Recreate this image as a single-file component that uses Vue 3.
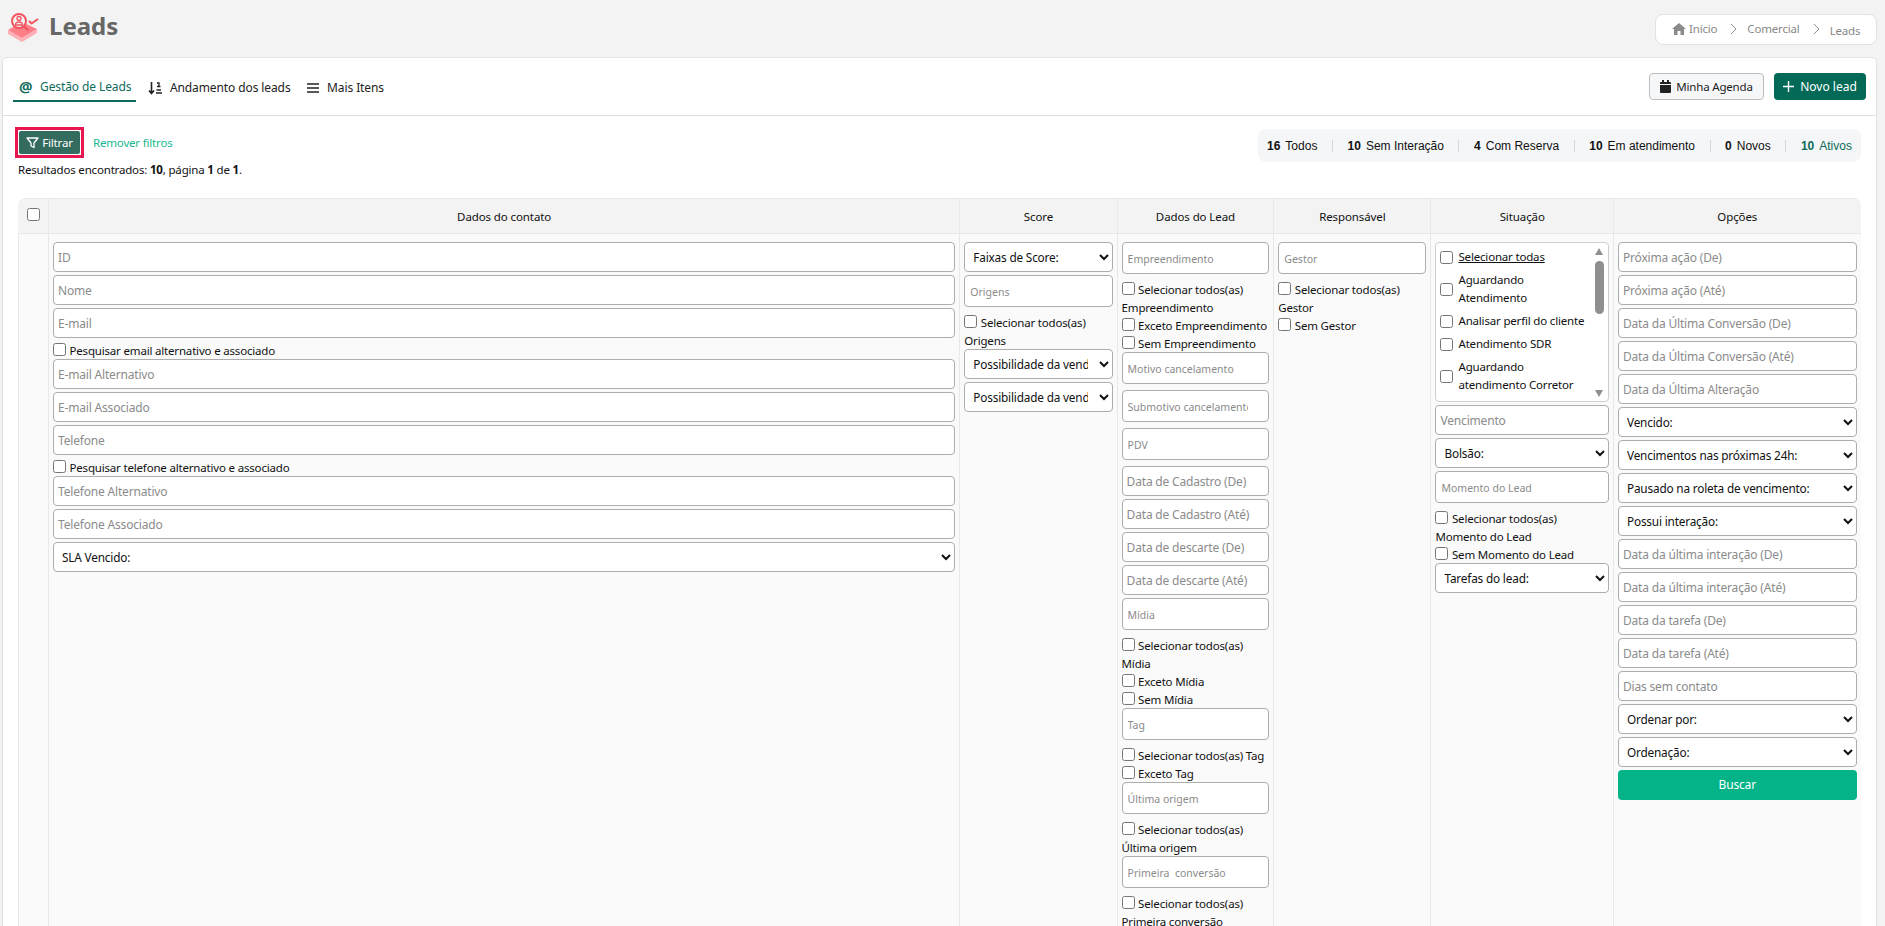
<script setup>
const T = 'in', G = 'tag', S = 'sel', C = 'chk'
const contato = [
  [T, 'ID'], [T, 'Nome'], [T, 'E-mail'], [C, 'Pesquisar email alternativo e associado'],
  [T, 'E-mail Alternativo'], [T, 'E-mail Associado'], [T, 'Telefone'],
  [C, 'Pesquisar telefone alternativo e associado'], [T, 'Telefone Alternativo'],
  [T, 'Telefone Associado'], [S, 'SLA Vencido:']
]
const score = [
  [S, 'Faixas de Score:'], [G, 'Origens'], [C, 'Selecionar todos(as) Origens'],
  [S, 'Possibilidade da venda:'], [S, 'Possibilidade da venda:']
]
const lead = [
  [G, 'Empreendimento'], [C, 'Selecionar todos(as) Empreendimento'], [C, 'Exceto Empreendimento'],
  [C, 'Sem Empreendimento'], [G, 'Motivo cancelamento'], [G, 'Submotivo cancelamento'], [G, 'PDV'],
  [T, 'Data de Cadastro (De)'], [T, 'Data de Cadastro (Até)'], [T, 'Data de descarte (De)'],
  [T, 'Data de descarte (Até)'], [G, 'Mídia'], [C, 'Selecionar todos(as) Mídia'], [C, 'Exceto Mídia'],
  [C, 'Sem Mídia'], [G, 'Tag'], [C, 'Selecionar todos(as) Tag'], [C, 'Exceto Tag'],
  [G, 'Última origem'], [C, 'Selecionar todos(as) Última origem'],
  [G, 'Primeira\u00a0 conversão'], [C, 'Selecionar todos(as) Primeira conversão']
]
const resp = [[G, 'Gestor'], [C, 'Selecionar todos(as) Gestor'], [C, 'Sem Gestor']]
const situacao = [
  [T, 'Vencimento'], [S, 'Bolsão:'], [G, 'Momento do Lead'],
  [C, 'Selecionar todos(as) Momento do Lead'], [C, 'Sem Momento do Lead'], [S, 'Tarefas do lead:']
]
const opcoes = [
  [T, 'Próxima ação (De)'], [T, 'Próxima ação (Até)'], [T, 'Data da Última Conversão (De)'],
  [T, 'Data da Última Conversão (Até)'], [T, 'Data da Última Alteração'], [S, 'Vencido:'],
  [S, 'Vencimentos nas próximas 24h:'], [S, 'Pausado na roleta de vencimento:'], [S, 'Possui interação:'],
  [T, 'Data da última interação (De)'], [T, 'Data da última interação (Até)'], [T, 'Data da tarefa (De)'],
  [T, 'Data da tarefa (Até)'], [T, 'Dias sem contato'], [S, 'Ordenar por:'], [S, 'Ordenação:']
]
const colsBefore = [contato, score, lead, resp]
const situacoes = ['Aguardando Atendimento', 'Analisar perfil do cliente', 'Atendimento SDR', 'Aguardando atendimento Corretor']
const stats = [
  ['16', 'Todos'], ['10', 'Sem Interação'], ['4', 'Com Reserva'],
  ['10', 'Em atendimento'], ['0', 'Novos'], ['10', 'Ativos']
]
const heads = ['Dados do contato', 'Score', 'Dados do Lead', 'Responsável', 'Situação', 'Opções']
</script>

<template>
  <div class="page">
    <header class="top">
      <div class="title">
        <svg class="logo" width="32" height="32" viewBox="0 0 32 32">
          <path d="M1 20l14 8 15-9v4L15 32 1 24z" fill="#ffb0b6" />
          <path d="M1 20l14-8 15 7-15 9z" fill="#ff7f89" />
          <circle cx="12" cy="11" r="7" fill="#f3f3f3" stroke="#f2545f" stroke-width="2" />
          <circle cx="12" cy="8.500" r="2" fill="none" stroke="#f2545f" stroke-width="1.300" />
          <path d="M8.500 15c0-4 7-4 7 0z" fill="none" stroke="#f2545f" stroke-width="1.300" />
          <path d="M17 16.500l4.500 4" stroke="#f2545f" stroke-width="2.200" />
          <path d="M22 11l2.500 2.500L31 9" fill="none" stroke="#f2545f" stroke-width="2" />
        </svg>
        <h1>Leads</h1>
      </div>
      <nav class="crumbs">
        <svg width="14" height="12" viewBox="0 0 14 12"><path d="M7 0L0 6h2v6h3.500V8h3v4H12V6h2z" fill="#8a8a8a" /></svg>
        <span class="c-home">Início</span>
        <svg class="chev" width="7" height="12" viewBox="0 0 7 12"><path d="M1 1l5 5-5 5" fill="none" stroke="#8f8f8f" /></svg>
        <span>Comercial</span>
        <svg class="chev" width="7" height="12" viewBox="0 0 7 12"><path d="M1 1l5 5-5 5" fill="none" stroke="#8f8f8f" /></svg>
        <span class="c-last">Leads</span>
      </nav>
    </header>

    <main class="card">
      <div class="tabbar">
        <div class="tabs">
          <a class="tab active"><span class="at">@</span>Gestão de Leads</a>
          <a class="tab">
            <svg width="14" height="14" viewBox="0 0 14 14">
              <path d="M3.500 1v11M1 9.500L3.500 12.500 6 9.500" fill="none" stroke="#222" stroke-width="1.600" />
              <path d="M9 2h2v3M8 12h6M8.500 9h4.500M9 5.500h3.500" fill="none" stroke="#222" stroke-width="1.300" />
            </svg>
            Andamento dos leads
          </a>
          <a class="tab">
            <svg width="12" height="12" viewBox="0 0 12 12"><path d="M0 2h12M0 6h12M0 10h12" stroke="#222" stroke-width="1.600" /></svg>
            Mais Itens
          </a>
        </div>
        <div class="actions">
          <button class="btn light">
            <svg width="11" height="13" viewBox="0 0 11 13"><path d="M0 5h11v7a1 1 0 0 1-1 1H1a1 1 0 0 1-1-1zM0 4V3a1 1 0 0 1 1-1h1V0h2v2h3V0h2v2h1a1 1 0 0 1 1 1v1z" fill="#222" /></svg>
            Minha Agenda
          </button>
          <button class="btn dark">
            <svg width="11" height="11" viewBox="0 0 11 11"><path d="M5.500 0v11M0 5.500h11" stroke="#fff" stroke-width="1.400" /></svg>
            Novo lead
          </button>
        </div>
      </div>

      <div class="content">
        <div class="toolbar">
          <div>
            <div class="filter-line">
              <div class="focus-ring">
                <button class="filter">
                  <svg width="13" height="12" viewBox="0 0 13 12"><path d="M1 1h11L8 6v4.500L5 9V6z" fill="none" stroke="#fff" stroke-width="1.300" stroke-linejoin="round" /></svg>
                  Filtrar
                </button>
              </div>
              <a class="remove">Remover filtros</a>
            </div>
            <p class="results">Resultados encontrados: <b>10</b>, página <b>1</b> de <b>1</b>.</p>
          </div>
          <div class="stats">
            <template v-for="(s, i) in stats" :key="s[1]">
              <span v-if="i" class="sep"></span>
              <span class="stat" :class="{ on: s[1] === 'Ativos' }"><b>{{ s[0] }}</b>{{ s[1] }}</span>
            </template>
          </div>
        </div>

        <div class="grid">
          <div class="th first"><input type="checkbox" class="cb" /></div>
          <div v-for="h in heads" :key="h" class="th">{{ h }}</div>

          <div class="td"></div>
          <div v-for="(col, ci) in colsBefore" :key="ci" class="td">
            <template v-for="(f, i) in col" :key="i">
              <input v-if="f[0] === T" class="f-in" :placeholder="f[1]" />
              <input v-else-if="f[0] === G" class="f-tag" :placeholder="f[1]" />
              <select v-else-if="f[0] === S" class="f-sel"><option>{{ f[1] }}</option></select>
              <label v-else class="f-chk"><input type="checkbox" class="cb" />{{ f[1] }}</label>
            </template>
          </div>

          <div class="td">
            <div class="listbox">
              <label class="li under"><input type="checkbox" class="cb" /><span>Selecionar todas</span></label>
              <label v-for="s in situacoes" :key="s" class="li"><input type="checkbox" class="cb" /><span>{{ s }}</span></label>
              <div class="bar">
                <i class="up"></i>
                <i class="thumb"></i>
                <i class="down"></i>
              </div>
            </div>
            <template v-for="(f, i) in situacao" :key="i">
              <input v-if="f[0] === T" class="f-in" :placeholder="f[1]" />
              <input v-else-if="f[0] === G" class="f-tag" :placeholder="f[1]" />
              <select v-else-if="f[0] === S" class="f-sel"><option>{{ f[1] }}</option></select>
              <label v-else class="f-chk"><input type="checkbox" class="cb" />{{ f[1] }}</label>
            </template>
          </div>

          <div class="td">
            <template v-for="(f, i) in opcoes" :key="i">
              <input v-if="f[0] === T" class="f-in" :placeholder="f[1]" />
              <select v-else class="f-sel"><option>{{ f[1] }}</option></select>
            </template>
            <button class="search">Buscar</button>
          </div>
        </div>
      </div>
    </main>
  </div>
</template>

<style scoped>
.page {
  height: 926px;
  overflow: hidden;
  background: #f3f3f3;
  font: 11.500px/18px "Noto Sans", sans-serif;
  letter-spacing: -0.18px;
  color: #111;
}
.top {
  height: 57px;
  box-sizing: border-box;
  padding: 14px 8px 0 7px;
  display: flex;
  justify-content: space-between;
  align-items: flex-start;
}
.title { display: flex; align-items: center; gap: 10px; margin-top: -4px; }
.title h1 { margin: 0; font: 700 24px/32px "Noto Sans", sans-serif; letter-spacing: 0; color: #666; }
.crumbs {
  box-sizing: border-box;
  width: 222px;
  height: 31px;
  background: #fff;
  border: 1px solid #e2e2e2;
  border-radius: 8px;
  display: flex;
  align-items: center;
  padding: 0 0 2px 16px;
  color: #888;
}
.c-home { margin-left: 3px; }
.chev { margin: 0 10px 0 13px; }
.c-last { position: relative; top: 2px; }
.card {
  margin: 0 8px 0 2px;
  background: #fff;
  border: 1px solid #e2e2e2;
  border-radius: 5px 5px 0 0;
  height: 900px;
}
.tabbar {
  height: 58px;
  box-sizing: border-box;
  border-bottom: 1px solid #e0e0e0;
  padding: 15px 10px 0 10px;
  display: flex;
  justify-content: space-between;
  align-items: flex-start;
}
.tabs { display: flex; gap: 6.500px; font-size: 12px; letter-spacing: -0.1px; }
.tab {
  height: 29px;
  box-sizing: border-box;
  padding: 1px 5px 0;
  display: flex;
  align-items: center;
  gap: 8px;
  color: #222;
  white-space: nowrap;
}
.tab.active { color: #0f6b5a; border-bottom: 2px solid #0b6b5a; padding-left: 6px; gap: 7px; }
.at { font-size: 15px; font-weight: 700; width: 14px; margin-top: -3px; }
.actions { display: flex; gap: 10px; }
.btn {
  font: inherit;
  letter-spacing: inherit;
  height: 27px;
  box-sizing: border-box;
  border-radius: 4px;
  display: flex;
  align-items: center;
  justify-content: center;
  gap: 5px;
  padding: 0;
}
.btn.light { width: 115px; background: #f6f7f9; border: 1px solid #bdbdbd; color: #222; }
.btn.dark { width: 92px; background: #046a57; border: 0; color: #fff; gap: 6px; font-size: 12px; letter-spacing: 0; }
.content { padding: 0 15px 0 15px; }
.toolbar { display: flex; justify-content: space-between; align-items: flex-start; padding-top: 11px; height: 82px; box-sizing: border-box; }
.filter-line { display: flex; align-items: center; gap: 9px; margin-left: -3px; }
.focus-ring {
  border: 3px solid #e8174f;
  width: 69px;
  height: 31px;
  box-sizing: border-box;
  padding: 1px;
}
.filter {
  width: 100%;
  height: 100%;
  font: inherit;
  letter-spacing: inherit;
  color: #fff;
  background: #336b5e;
  border: 0;
  border-radius: 2px;
  display: flex;
  align-items: center;
  justify-content: center;
  gap: 3px;
  padding: 0;
}
.remove { color: #17b890; }
.results { margin: 3px 0 0; }
.results b { font-weight: 700; }
.stats {
  width: 603px;
  height: 33px;
  margin: 2px 0 0 0;
  padding: 1px 9px 0 9px;
  box-sizing: border-box;
  background: #f5f6f7;
  border-radius: 8px;
  display: flex;
  align-items: center;
  justify-content: space-between;
  font: 12px "Liberation Sans", sans-serif;
  letter-spacing: 0;
}
.stat b { margin-right: 5px; }
.stat.on { color: #0b6b5a; }
.sep { width: 1px; height: 12px; background: #d8d8d8; }
.grid {
  display: grid;
  grid-template-columns: 30px 911.3px 157.3px 156.7px 157.2px 182.5px 247.6px;
  border-radius: 8px 8px 0 0;
  overflow: hidden;
  border-top: 1px solid #e9e9e9;
}
.th {
  height: 35px;
  box-sizing: border-box;
  padding-top: 2px;
  letter-spacing: -0.1px;
  background: #f3f3f3;
  border-left: 1px solid #e8e8e8;
  border-bottom: 1px solid #e8e8e8;
  display: flex;
  align-items: center;
  justify-content: center;
}
.th.first { align-items: flex-start; padding-top: 9px; border-left: 0; }
.td {
  background: #fafafa;
  border-left: 1px solid #e8e8e8;
  padding: 8px 4px 0;
  min-height: 700px;
  box-sizing: border-box;
  display: flex;
  flex-direction: column;
  align-items: stretch;
  min-width: 0;
}
.td:first-of-type { border-left: 0; }
.cb {
  width: 13px;
  height: 13px;
  margin: 0 3.500px 0 0;
  vertical-align: -1px;
}
.th .cb { margin: 0; }
.f-in, .f-tag, .f-sel {
  display: block;
  width: 100%;
  box-sizing: border-box;
  background: #fff;
  border: 1px solid #adadad;
  border-radius: 4px;
  margin: 0 0 3px;
  font: 12px "Noto Sans", sans-serif;
  letter-spacing: -0.18px;
  color: #111;
  outline: 0;
  flex: none;
}
.f-in { height: 30px; padding: 0 4px; }
.f-tag { height: 32px; margin-bottom: 6px; padding: 2px 20px 0 5px; font-size: 10.500px; letter-spacing: 0; }
.f-sel { height: 30px; padding: 0 8px 0 4px; font-size: 11.800px; }
.f-in::placeholder, .f-tag::placeholder { color: #8b8b8b; opacity: 1; }
.f-chk { display: block; line-height: 18px; flex: none; padding-top: 1px; margin-bottom: -1px; }
.listbox {
  position: relative;
  height: 160px;
  flex: none;
  box-sizing: border-box;
  background: #fff;
  border: 1px solid #cfcfcf;
  border-radius: 4px;
  margin-bottom: 3px;
  padding: 5px 18px 0 4px;
  overflow: hidden;
  display: flex;
  flex-direction: column;
  gap: 5px;
}
.li { display: flex; align-items: center; flex: none; }
.li .cb { flex: none; margin: 0 5px 0 0; }
.li.under span { text-decoration: underline; }
.bar { position: absolute; top: 0; right: 0; bottom: 0; width: 13px; }
.bar i { position: absolute; display: block; }
.thumb { top: 18px; left: 0; width: 9px; height: 53px; border-radius: 5px; background: #8f8f8f; }
.up, .down { left: 0; width: 0; height: 0; border-left: 4.500px solid transparent; border-right: 4.500px solid transparent; }
.up { top: 5px; border-bottom: 7px solid #8f8f8f; }
.down { bottom: 4px; border-top: 7px solid #8f8f8f; }
.search {
  flex: none;
  height: 30px;
  font: inherit;
  font-size: 12px;
  letter-spacing: inherit;
  color: #fff;
  background: #04b488;
  border: 0;
  border-radius: 4px;
}
</style>

<style>
html, body { margin: 0; overflow: hidden; }
</style>
